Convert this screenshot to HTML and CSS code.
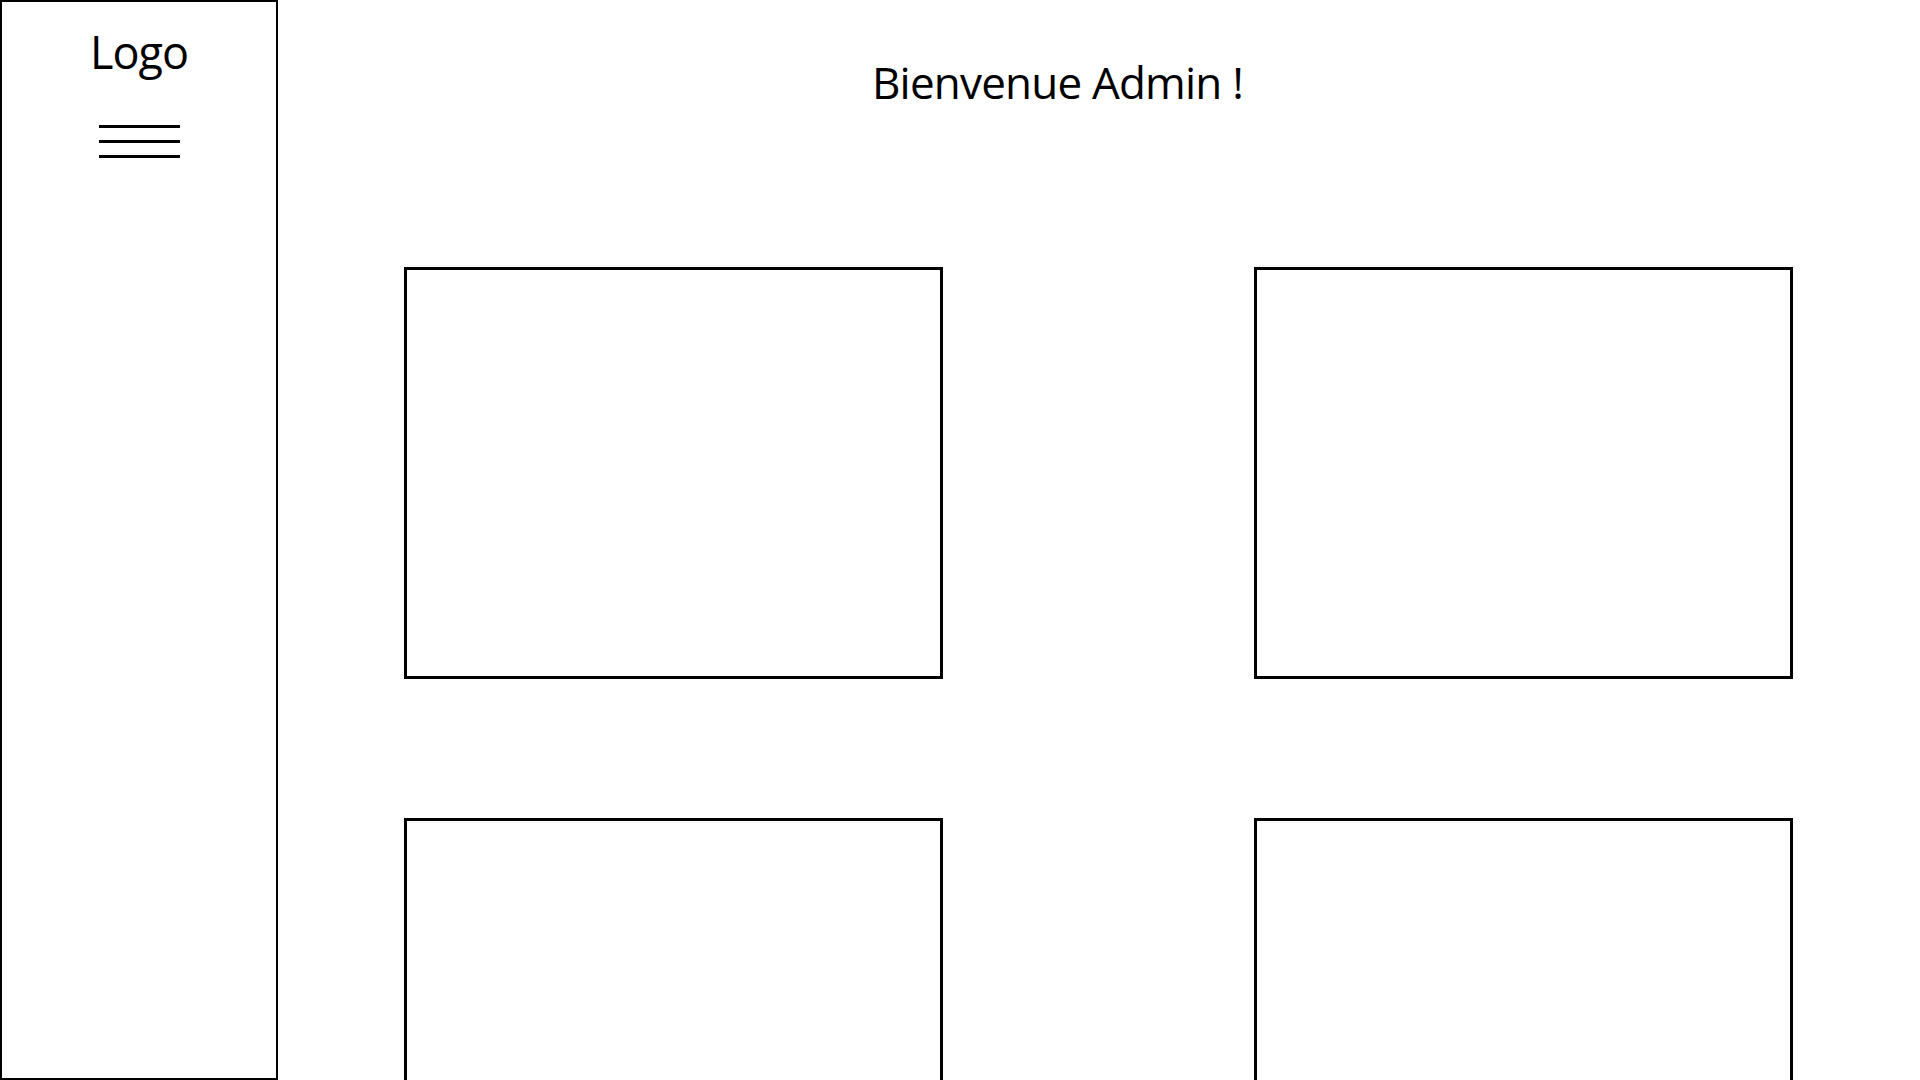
FILE: index.html
```html
<!DOCTYPE html>
<html lang="fr">
<head>
<meta charset="utf-8">
<title>Admin</title>
<link rel="stylesheet" href="styles.css">
</head>
<body>
<div class="layout">
  <aside class="sidebar">
    <div class="logo">Logo</div>
    <div class="burger">
      <span></span><span></span><span></span>
    </div>
  </aside>
  <main class="main">
    <h1 class="title">Bienvenue Admin !</h1>
    <div class="cards">
      <div class="card"></div>
      <div class="card"></div>
      <div class="card"></div>
      <div class="card"></div>
    </div>
  </main>
</div>
</body>
</html>
```
FILE: styles.css
```css
* { box-sizing: border-box; }
html, body {
  margin: 0;
  padding: 0;
  height: 100%;
  overflow: hidden;
  background: #fff;
  color: #000;
  font-family: "Open Sans", "Noto Sans", sans-serif;
}
.layout {
  display: flex;
  height: 1080px;
  overflow: hidden;
}
.sidebar {
  width: 278px;
  flex: 0 0 278px;
  height: 1080px;
  border: 2px solid #000;
  display: flex;
  flex-direction: column;
  align-items: center;
  padding-top: 20px;
}
.logo {
  font-size: 45px;
  line-height: 60px;
  letter-spacing: -1px;
}
.burger {
  margin-top: 43px;
  width: 81px;
  display: flex;
  flex-direction: column;
  gap: 12px;
}
.burger span {
  display: block;
  height: 3px;
  background: #000;
}
.main {
  flex: 1;
  display: flex;
  flex-direction: column;
  overflow: hidden;
}
.title {
  margin: 52px 0 0 0;
  padding-right: 83px;
  text-align: center;
  font-weight: 400;
  font-size: 44px;
  line-height: 60px;
  letter-spacing: -0.8px;
}
.cards {
  margin-top: 155px;
  padding-left: 126px;
  display: grid;
  grid-template-columns: 539px 539px;
  column-gap: 311px;
  row-gap: 139px;
  justify-content: start;
}
.card {
  height: 412px;
  border: 3px solid #000;
}
```
